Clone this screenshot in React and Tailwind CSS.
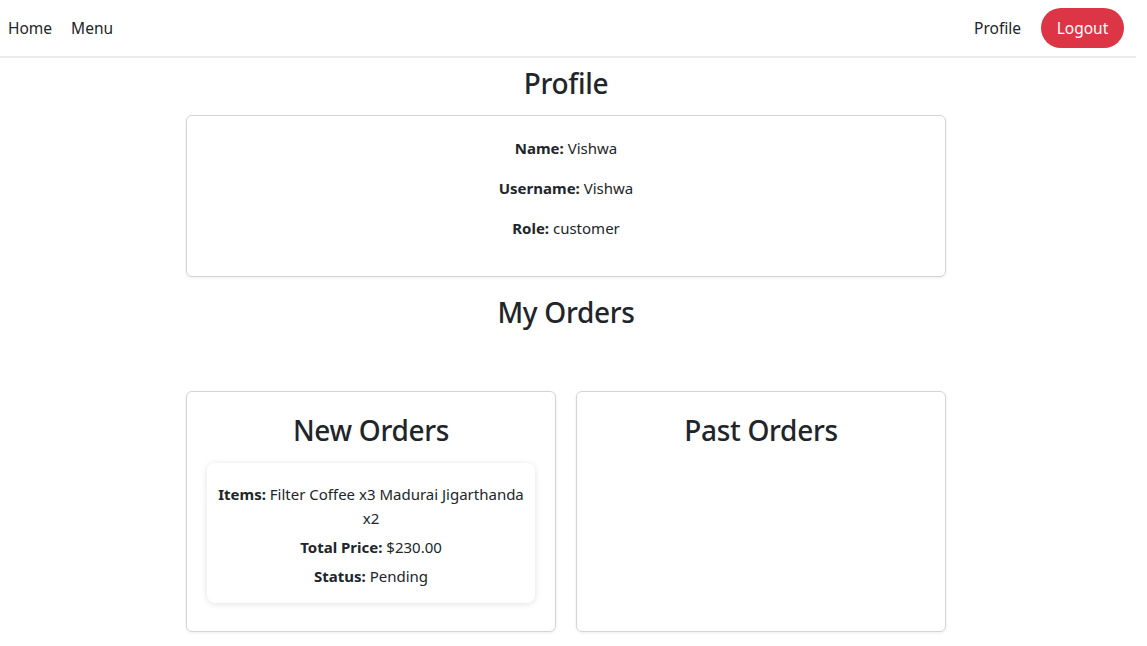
export default function App() {
  return (
    <div className="w-[1136px] min-h-[646px] bg-white text-[#212529] text-[15px] leading-[24px]" style={{ fontFamily: '"Noto Sans", "Open Sans", sans-serif' }}>
      <nav className="h-[58px] border-b-2 border-[#ebebeb] flex items-center justify-between pl-2 pr-3">
        <div className="flex items-center gap-[19px]">
          <a className="text-[#212529] text-[15.5px]">Home</a>
          <a className="text-[#212529] text-[15.5px]">Menu</a>
        </div>
        <div className="flex items-center gap-[20px]">
          <a className="text-[#212529] text-[15.5px]">Profile</a>
          <button className="h-[40px] w-[83px] rounded-full bg-[#dc3545] text-white text-[15.5px]">Logout</button>
        </div>
      </nav>
      <main className="w-[1132px] flex flex-col items-center">
        <h2 className="text-[28px] leading-[34px] font-medium mt-[8px] mb-[15px] tracking-[-0.3px]">Profile</h2>
        <div className="w-[760px] border border-[#d4d4d4] rounded-[6px] shadow-[0_1px_3px_rgba(0,0,0,0.08)] px-5 pt-5 pb-5 text-center">
          <p className="mb-4"><strong>Name:</strong> Vishwa</p>
          <p className="mb-4"><strong>Username:</strong> Vishwa</p>
          <p className="mb-4"><strong>Role:</strong> customer</p>
        </div>
        <h2 className="text-[28px] leading-[34px] font-medium mt-[18px] mb-[62px] tracking-[-0.3px]">My Orders</h2>
        <div className="flex gap-[20px]">
          <div className="w-[370px] h-[241px] border border-[#d4d4d4] rounded-[6px] shadow-[0_1px_3px_rgba(0,0,0,0.08)] px-5 pt-[21px] text-center">
            <h2 className="text-[28px] leading-[34px] font-medium mb-[16px] tracking-[-0.3px]">New Orders</h2>
            <div className="rounded-[8px] shadow-[0_1px_6px_rgba(0,0,0,0.12)] px-[10px] pt-[19px] pb-[15px]">
              <p><strong>Items:</strong> Filter Coffee x3 Madurai Jigarthanda x2</p>
              <p className="mt-[5px]"><strong>Total Price:</strong> $230.00</p>
              <p className="mt-[5px]"><strong>Status:</strong> Pending</p>
            </div>
          </div>
          <div className="w-[370px] h-[241px] border border-[#d4d4d4] rounded-[6px] shadow-[0_1px_3px_rgba(0,0,0,0.08)] px-5 pt-[21px] text-center">
            <h2 className="text-[28px] leading-[34px] font-medium tracking-[-0.3px]">Past Orders</h2>
          </div>
        </div>
      </main>
    </div>
  );
}
